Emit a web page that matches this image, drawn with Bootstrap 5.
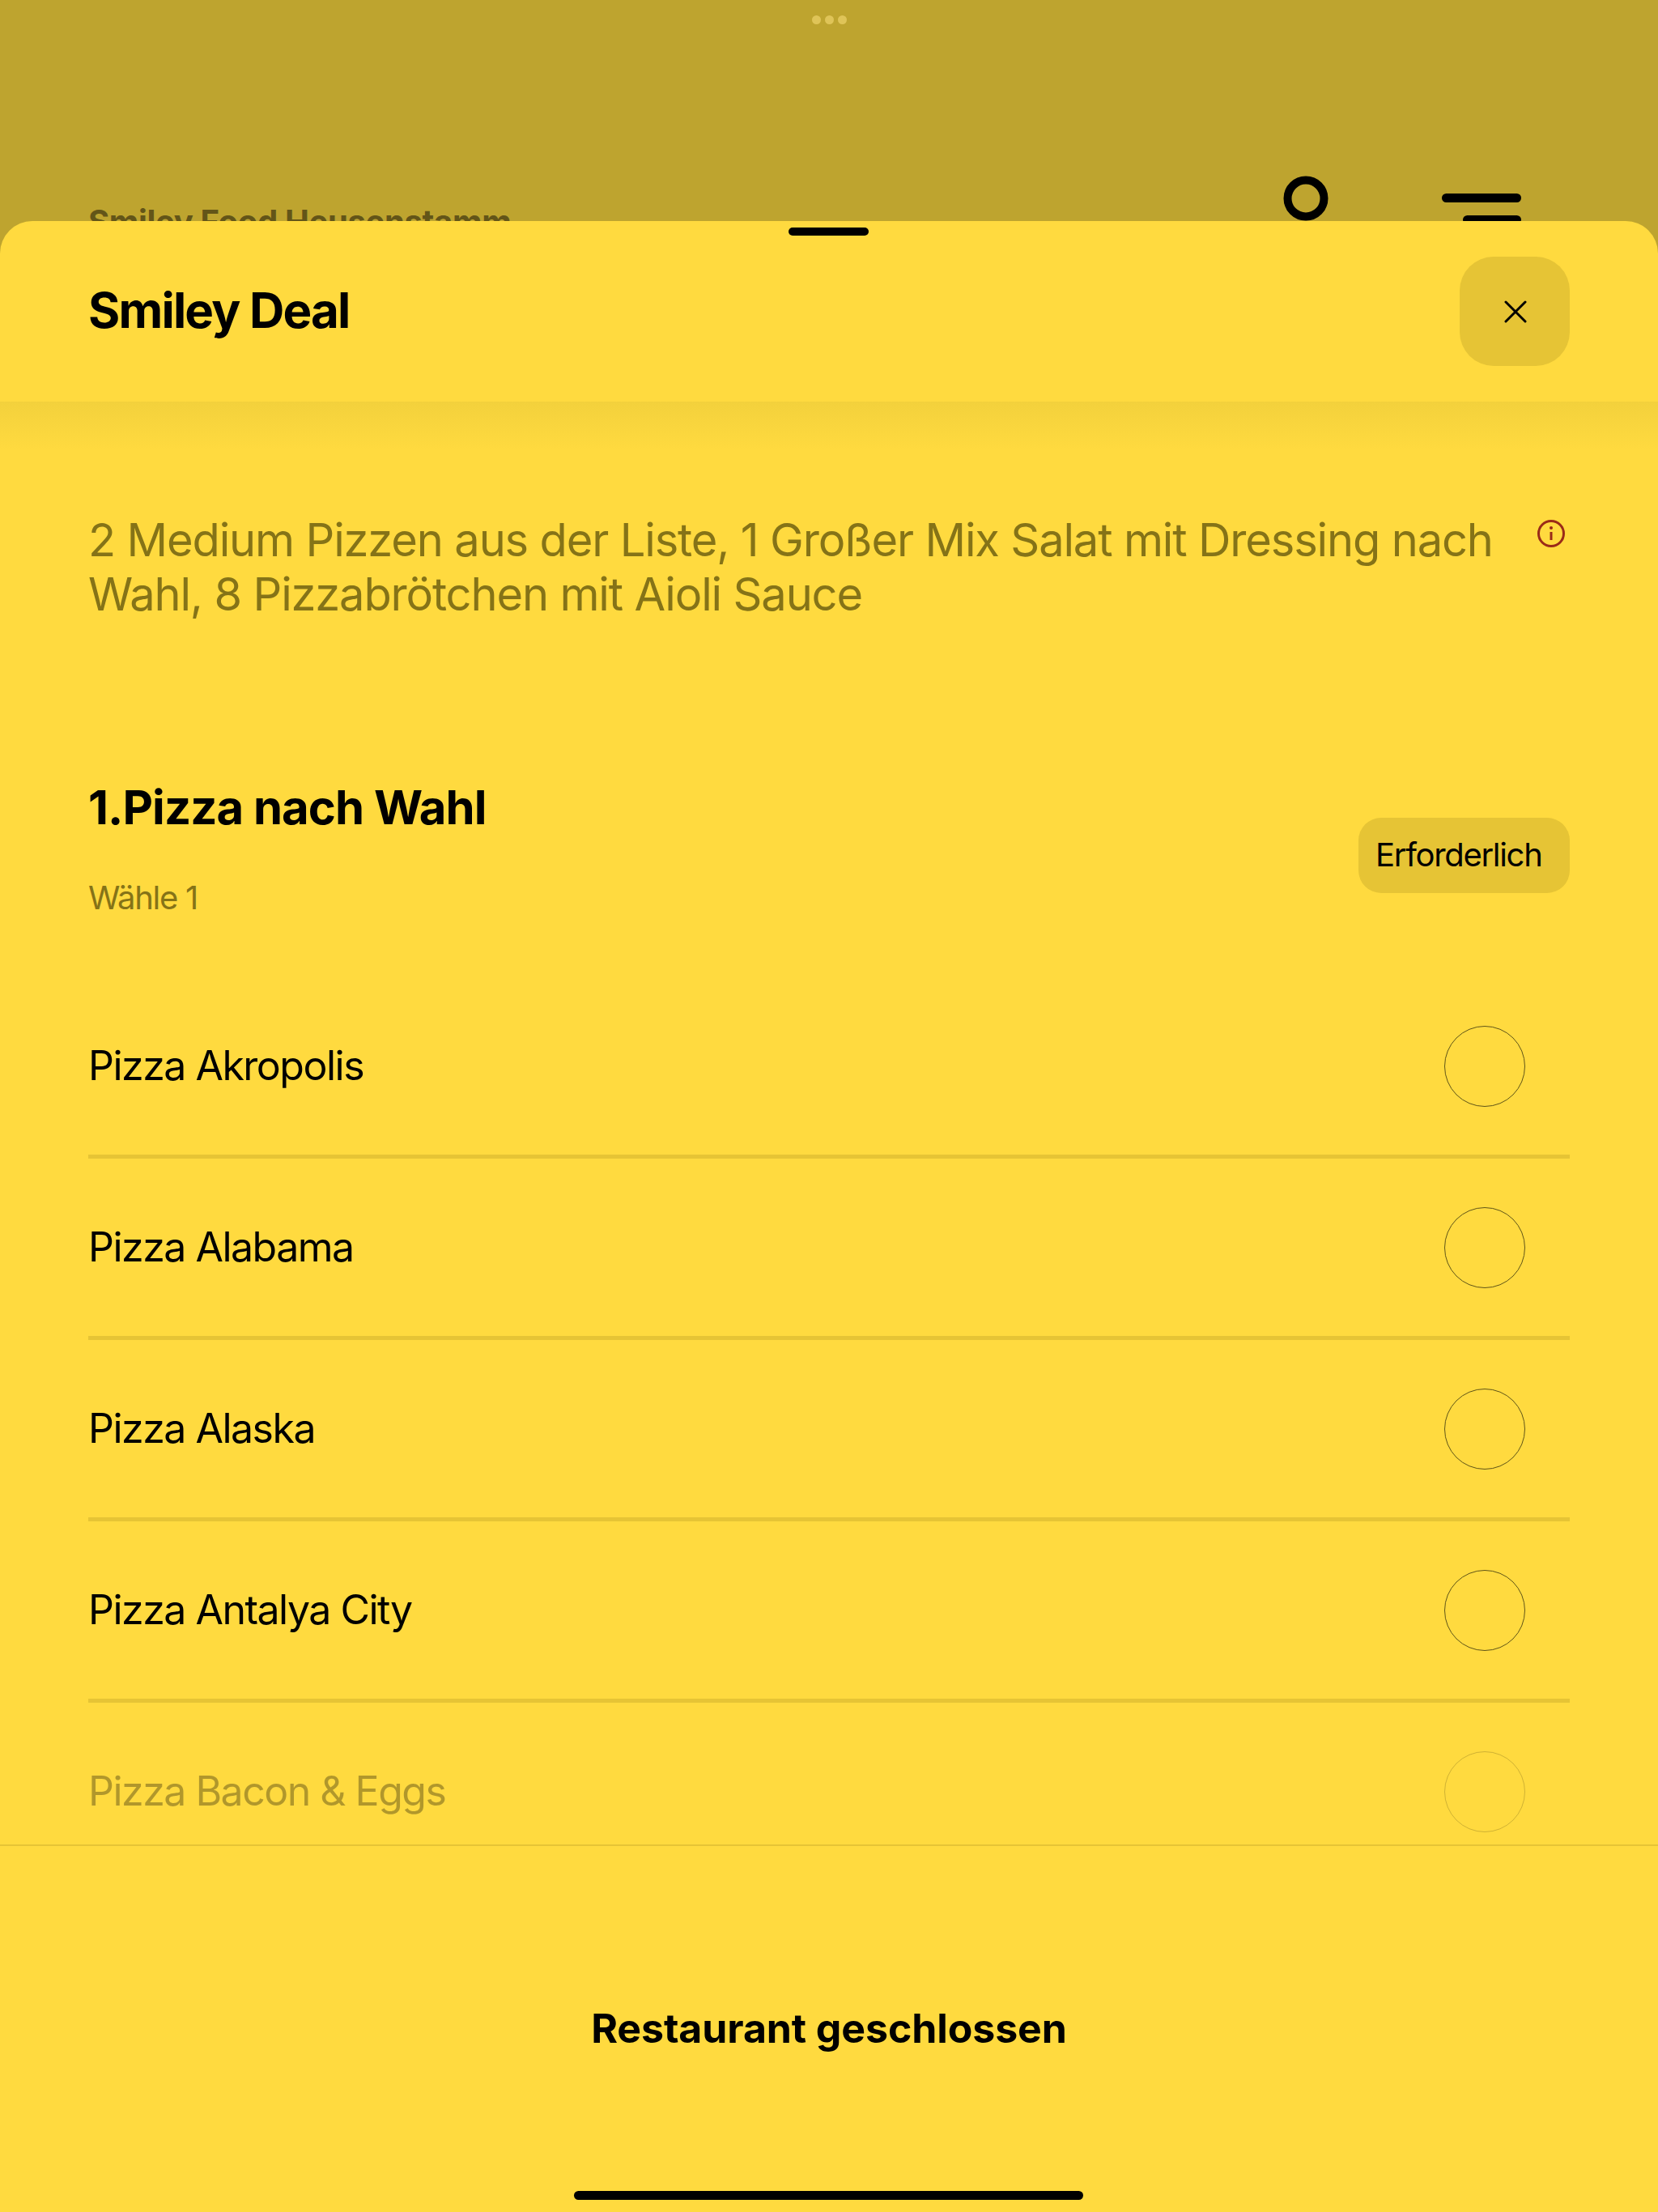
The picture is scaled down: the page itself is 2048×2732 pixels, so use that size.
<!DOCTYPE html>
<html lang="de">
<head>
    <meta charset="UTF-8">
    <meta name="viewport" content="width=device-width, initial-scale=1.0">
    <title>Smiley Deal</title>
    <link href="https://cdn.jsdelivr.net/npm/bootstrap@5.3.0/dist/css/bootstrap.min.css" rel="stylesheet">
    <style>
        html, body { height: 2732px; overflow: hidden; }
        body { background: #bea42f; font-family: "Inter", "Liberation Sans", sans-serif; color: #000; position: relative; }
        .top-dots { padding-top: 19px; gap: 5px; }
        .top-dots span { width: 11px; height: 11px; border-radius: 50%; background: #dfc458; }
        .page-head { padding: 0 169px 0 109px; margin-top: 187px; height: 70px; }
        .page-name { font-size: 40px; font-weight: 700; color: #635518; margin-top: 27px; letter-spacing: -0.35px; }
        .page-icons { gap: 140px; }
        .menu-icon { gap: 16px; width: 98px; margin-top: 22px; }
        .menu-icon span { height: 11px; border-radius: 6px; background: #000; }
        .menu-icon span + span { width: 72px; }

        .sheet { position: absolute; top: 273px; left: 0; right: 0; bottom: 0; background: #ffda3f; border-radius: 40px 40px 0 0; }
        .grab { position: absolute; top: 8px; left: 974px; width: 99px; height: 10px; background: #000; border-radius: 5px; }
        .sheet-head { height: 223px; padding: 0 109px 0 109px; flex: none; }
        .sheet-title { font-size: 60px; font-weight: 700; margin: 0 0 3px; letter-spacing: -1.8px; }
        .close-btn { width: 136px; height: 135px; border: 0; padding: 0 0 0 1px; background: #e6c435; border-radius: 42px; }
        .sheet-body { flex: 1 1 auto; position: relative; overflow: hidden; padding: 0 109px; }
        .head-shade { position: absolute; top: 0; left: 0; right: 0; height: 60px; background: linear-gradient(#f3d13c, #ffda3f); }
        .intro { padding-top: 138px; height: 467px; }
        .intro-text { font-size: 56px; line-height: 67px; color: #857317; width: 1760px; margin: 0; letter-spacing: -1.15px; }
        .info-icon { margin: 7px 5px 0 0; }
        .group-head { height: 244px; }
        .group-title { font-size: 58px; font-weight: 700; margin: 0 0 46px; letter-spacing: -0.95px; }
        .group-hint { font-size: 40px; color: #857317; letter-spacing: -1.3px; }
        .need-tag { width: 261px; height: 93px; background: #e6c435; border-radius: 28px; font-size: 40px; padding: 22px 0 0 21px; line-height: 48px; margin-top: 47px; letter-spacing: -1.3px; }
        .pick-list { --bs-list-group-bg: transparent; --bs-list-group-border-width: 5px; --bs-list-group-border-color: #e6c435; }
        .pick-row { height: 224px; padding: 0 55px 0 0; font-size: 50px; color: #000; letter-spacing: -1.5px; }
        .pick-row:last-child { opacity: .3; padding-bottom: 5px; }
        .pick-dot { width: 100px; height: 100px; margin: 0; background: transparent; border: 1.5px solid #5f5417; }
        .sheet-foot { height: 454px; flex: none; border-top: 2px solid #e6c435; font-size: 50px; font-weight: 700; letter-spacing: -0.1px; padding-bottom: 2px; }
        .home-bar { position: absolute; bottom: 15px; left: 709px; width: 629px; height: 11px; background: #000; border-radius: 6px; }
    </style>
</head>
<body>
    <div class="d-flex justify-content-center top-dots"><span></span><span></span><span></span></div>

    <!-- Seite hinter dem Sheet -->
    <div class="d-flex justify-content-between align-items-start page-head">
        <div class="page-name">Smiley Food Heusenstamm</div>
        <div class="d-flex page-icons">
            <svg width="56" height="56" viewBox="0 0 56 56"><circle cx="28" cy="28" r="22.5" fill="none" stroke="#000" stroke-width="10"/></svg>
            <div class="d-flex flex-column align-items-end menu-icon"><span class="w-100"></span><span></span></div>
        </div>
    </div>

    <div class="sheet d-flex flex-column">
        <div class="grab"></div>
        <div class="d-flex justify-content-between align-items-center sheet-head">
            <h1 class="sheet-title">Smiley Deal</h1>
            <button class="close-btn d-flex align-items-center justify-content-center" type="button" aria-label="Schließen">
                <svg width="28" height="28" viewBox="0 0 28 28"><path d="M2 2L26 26M26 2L2 26" stroke="#000" stroke-width="3" stroke-linecap="round"/></svg>
            </button>
        </div>

        <div class="sheet-body">
            <div class="head-shade"></div>
            <div class="d-flex justify-content-between align-items-start intro">
                <p class="intro-text">2 Medium Pizzen aus der Liste, 1 Großer Mix Salat mit Dressing nach Wahl, 8 Pizzabrötchen mit Aioli Sauce</p>
                <svg class="info-icon" width="36" height="36" viewBox="0 0 36 36">
                    <circle cx="18" cy="18" r="15.5" fill="none" stroke="#9a2b18" stroke-width="3"/>
                    <circle cx="18" cy="11" r="2" fill="#9a2b18"/>
                    <path d="M18 16V26" stroke="#9a2b18" stroke-width="3"/>
                </svg>
            </div>

            <div class="d-flex justify-content-between align-items-start group-head">
                <div>
                    <h2 class="group-title">1.Pizza nach Wahl</h2>
                    <div class="group-hint">Wähle 1</div>
                </div>
                <div class="need-tag">Erforderlich</div>
            </div>

            <div class="list-group list-group-flush pick-list">
                <label class="list-group-item d-flex justify-content-between align-items-center pick-row">Pizza Akropolis<input class="form-check-input pick-dot" type="radio" name="pizza"></label>
                <label class="list-group-item d-flex justify-content-between align-items-center pick-row">Pizza Alabama<input class="form-check-input pick-dot" type="radio" name="pizza"></label>
                <label class="list-group-item d-flex justify-content-between align-items-center pick-row">Pizza Alaska<input class="form-check-input pick-dot" type="radio" name="pizza"></label>
                <label class="list-group-item d-flex justify-content-between align-items-center pick-row">Pizza Antalya City<input class="form-check-input pick-dot" type="radio" name="pizza"></label>
                <label class="list-group-item d-flex justify-content-between align-items-center pick-row">Pizza Bacon &amp; Eggs<input class="form-check-input pick-dot" type="radio" name="pizza"></label>
            </div>
        </div>

        <div class="sheet-foot d-flex align-items-center justify-content-center">Restaurant geschlossen</div>
        <div class="home-bar"></div>
    </div>

    <script src="https://cdn.jsdelivr.net/npm/bootstrap@5.3.0/dist/js/bootstrap.bundle.min.js"></script>
</body>
</html>
